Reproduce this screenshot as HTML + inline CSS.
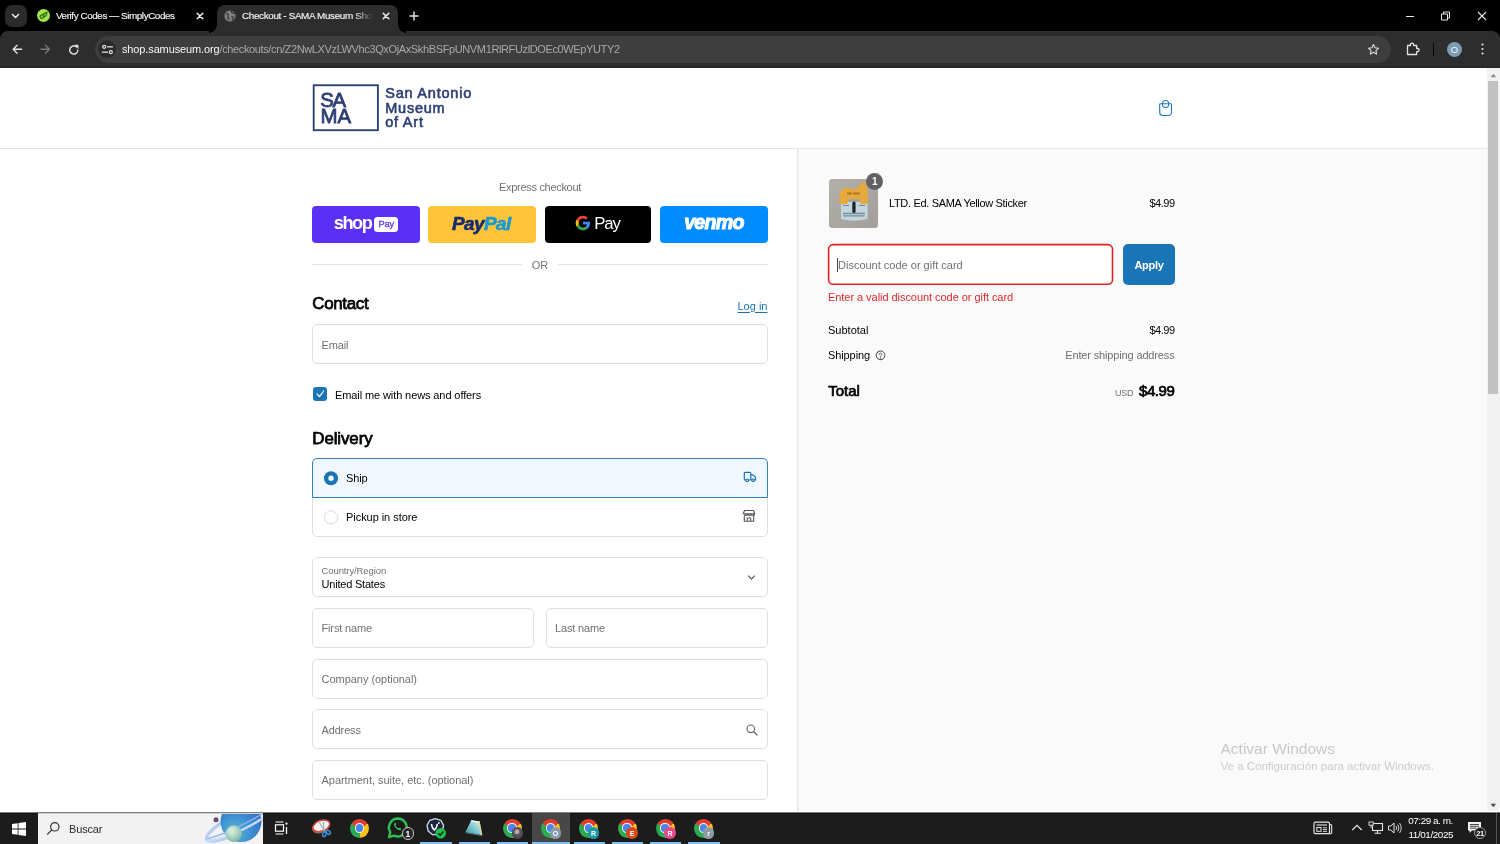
<!DOCTYPE html>
<html>
<head>
<meta charset="utf-8">
<title>Checkout - SAMA Museum Shop</title>
<style>
*{box-sizing:border-box;margin:0;padding:0}
html,body{width:1500px;height:844px;overflow:hidden;background:#fff}
body{font-family:"Liberation Sans",sans-serif;position:relative;color:#000;-webkit-font-smoothing:antialiased}
.abs{position:absolute}
.t{position:absolute;white-space:nowrap;line-height:1}
/* browser chrome */
#tabbar{left:0;top:0;width:1500px;height:42px;background:#000}
#toolbar{left:0;top:31px;width:1500px;height:37px;background:#2d2d2d;border-radius:8px 8px 0 0}
#urlpill{left:94.500px;top:36px;width:1296.500px;height:26.500px;border-radius:13.500px;background:#3e3e3e}
#tab2{left:217px;top:5px;width:181px;height:28px;background:#2d2d2d;border-radius:8px 8px 0 0}
#tbline{left:0;top:66px;width:1500px;height:2px;background:#272727}
.tabtxt{font-size:9.900px;color:#f4f4f4;top:10.800px;letter-spacing:-0.420px;-webkit-text-stroke:0.150px #f4f4f4}
/* page */
#hdr{left:0;top:68px;width:1487px;height:81px;background:#fff;border-bottom:1px solid #e6e6e6}
#left{left:0;top:149px;width:797px;height:663px;background:#fff}
#right{left:797px;top:149px;width:690px;height:664px;background:#fafafa;border-left:1px solid #e8e8e8}
#rline{left:798px;top:149px;width:1px;height:664px;background:#f1f1f1}
#sb{left:1487px;top:68px;width:13px;height:744px;background:#f1f1f1}
#sbthumb{left:1488.300px;top:81px;width:10px;height:312.800px;background:#c1c1c1}
.field{position:absolute;background:#fff;border:1px solid #e0e0e0;border-radius:5px}
.ph{position:absolute;white-space:nowrap;line-height:1;color:#707070;font-size:11px;letter-spacing:-0.150px}
/* taskbar */
#taskbar{left:0;top:812px;width:1500px;height:32px;background:#1c1c1c;border-top:1px solid #808080}
#tbwhite{left:0;top:811px;width:1500px;height:1px;background:#fff}
</style>
</head>
<body>
<div id="wrap" style="position:absolute;left:0;top:0;width:1500px;height:844px;will-change:transform;overflow:hidden">
<!-- ===== Browser chrome ===== -->
<div class="abs" id="tabbar"></div>
<div class="abs" id="toolbar"></div>
<div class="abs" id="tbline"></div>
<div class="abs" id="tab2"></div>
<div class="abs" style="left:209px;top:25px;width:8px;height:8px;background:radial-gradient(circle at 0 0,#000 7.5px,#2d2d2d 8px)"></div>
<div class="abs" style="left:398px;top:25px;width:8px;height:8px;background:radial-gradient(circle at 100% 0,#000 7.5px,#2d2d2d 8px)"></div>
<div class="abs" id="urlpill"></div>
<!-- tab search -->
<div class="abs" style="left:5px;top:5px;width:21.500px;height:22px;border-radius:7px;background:#2b2b2b"></div>
<svg class="abs" style="left:10px;top:11px" width="11" height="10" viewBox="0 0 11 10"><path d="M2.5 3.5 L5.5 6.5 L8.5 3.5" fill="none" stroke="#e8e8e8" stroke-width="1.5" stroke-linecap="round" stroke-linejoin="round"/></svg>
<!-- tab 1 -->
<div class="abs" style="left:37.100px;top:9.100px;width:13px;height:13px;border-radius:50%;background:#a3e34b"></div>
<svg class="abs" style="left:37.100px;top:9.100px" width="13" height="13" viewBox="0 0 13 13"><ellipse cx="5.300" cy="7.300" rx="2.300" ry="1.700" transform="rotate(-35 5.300 7.300)" fill="none" stroke="#2a6a10" stroke-width="1.100"/><ellipse cx="7.700" cy="5.700" rx="2.300" ry="1.500" transform="rotate(-35 7.700 5.700)" fill="none" stroke="#2a6a10" stroke-width="1.100"/><path d="M8.800 4.600 L10.300 3.100" stroke="#2a6a10" stroke-width="1.100" stroke-linecap="round"/></svg>
<div class="t tabtxt" style="left:56px">Verify Codes — SimplyCodes</div>
<svg class="abs" style="left:196px;top:12px" width="8" height="8" viewBox="0 0 8 8"><path d="M1.200 1.200 L6.800 6.800 M6.800 1.200 L1.200 6.800" stroke="#f0f0f0" stroke-width="1.500" stroke-linecap="round"/></svg>
<!-- tab 2 -->
<svg class="abs" style="left:223.5px;top:10px" width="12" height="12" viewBox="0 0 12 12"><circle cx="6" cy="6" r="5.6" fill="#7d7d7d"/><path d="M2 3.2c1.2.2 2 .9 2.2 2 .2 1-.6 1.500-.3 2.500.2.700.9 1.200.7 2.300M7.500 1c-.4.900.2 1.700 1.100 2 .8.300 1.900-.100 2.400.600M7.300 6.800c.8-.300 1.900.100 2.100.900.200.900-.5 1.900-1.300 2.500" fill="none" stroke="#2d2d2d" stroke-width="1.100"/></svg>
<div class="t tabtxt" style="left:242px;width:132px;overflow:hidden;letter-spacing:-0.350px;-webkit-mask-image:linear-gradient(90deg,#000 112px,transparent 131px);mask-image:linear-gradient(90deg,#000 112px,transparent 131px)">Checkout - SAMA Museum Shop</div>
<svg class="abs" style="left:382px;top:12px" width="8" height="8" viewBox="0 0 8 8"><path d="M1.200 1.200 L6.800 6.800 M6.800 1.200 L1.200 6.800" stroke="#f0f0f0" stroke-width="1.500" stroke-linecap="round"/></svg>
<svg class="abs" style="left:409px;top:11px" width="10" height="10" viewBox="0 0 10 10"><path d="M5 1 V9 M1 5 H9" stroke="#e8e8e8" stroke-width="1.4" stroke-linecap="round"/></svg>
<!-- window controls -->
<svg class="abs" style="left:1405px;top:11px" width="10" height="10" viewBox="0 0 10 10"><path d="M1 5.500 H9" stroke="#e8e8e8" stroke-width="1"/></svg>
<svg class="abs" style="left:1440px;top:11px" width="11" height="10" viewBox="0 0 11 10"><path d="M1.500 3 h6 v6 h-6 z M3.500 3 V1 h6 v6 h-2" fill="none" stroke="#e8e8e8" stroke-width="1"/></svg>
<svg class="abs" style="left:1477px;top:11px" width="10" height="10" viewBox="0 0 10 10"><path d="M1 1 L9 9 M9 1 L1 9" stroke="#e8e8e8" stroke-width="1.100"/></svg>
<!-- nav buttons -->
<svg class="abs" style="left:12px;top:44.200px" width="10.500" height="10.500" viewBox="0 0 12 12"><path d="M11 6 H1.500 M5.800 1.500 L1.300 6 L5.800 10.500" fill="none" stroke="#e4e4e4" stroke-width="1.500" stroke-linecap="round" stroke-linejoin="round"/></svg>
<svg class="abs" style="left:40px;top:44.200px" width="10.500" height="10.500" viewBox="0 0 12 12"><path d="M1 6 H10.500 M6.200 1.500 L10.700 6 L6.200 10.500" fill="none" stroke="#7a7a7a" stroke-width="1.500" stroke-linecap="round" stroke-linejoin="round"/></svg>
<svg class="abs" style="left:68px;top:43.600px" width="12" height="12" viewBox="0 0 12 12"><path d="M9.900 6.300 A4.100 4.100 0 1 1 8.300 2.700" fill="none" stroke="#e4e4e4" stroke-width="1.400" stroke-linecap="round"/><path d="M6.600 1 h3.500 v3.500 z" fill="#e4e4e4" stroke="#e4e4e4" stroke-width=".5" stroke-linejoin="round"/></svg>
<!-- site info -->
<div class="abs" style="left:98px;top:40.400px;width:18px;height:18px;border-radius:50%;background:#2b2b2b"></div>
<svg class="abs" style="left:101px;top:43px" width="13" height="13" viewBox="0 0 13 13"><circle cx="3.200" cy="3.800" r="1.500" fill="none" stroke="#e4e4e4" stroke-width="1.200"/><path d="M6.500 3.800 H11.500" stroke="#e4e4e4" stroke-width="1.300" stroke-linecap="round"/><circle cx="9.800" cy="9.200" r="1.500" fill="none" stroke="#e4e4e4" stroke-width="1.200"/><path d="M1.500 9.200 H6.500" stroke="#e4e4e4" stroke-width="1.300" stroke-linecap="round"/></svg>
<div class="t" style="left:122px;top:44px;font-size:11px;color:#f6f6f6;letter-spacing:-0.130px">shop.samuseum.org<span style="color:#a9a9a9;letter-spacing:-0.370px">/checkouts/cn/Z2NwLXVzLWVhc3QxOjAxSkhBSFpUNVM1RlRFUzlDOEc0WEpYUTY2</span></div>
<!-- right toolbar icons -->
<svg class="abs" style="left:1367px;top:43.200px" width="13" height="13" viewBox="0 0 14 14"><path d="M7 1.600 L8.600 5.200 L12.500 5.600 L9.600 8.200 L10.400 12 L7 10 L3.600 12 L4.400 8.200 L1.500 5.600 L5.400 5.200 Z" fill="none" stroke="#e4e4e4" stroke-width="1.100" stroke-linejoin="round"/></svg>
<svg class="abs" style="left:1405px;top:41px" width="15" height="15" viewBox="0 0 15 15"><path d="M2.500 4.500 h3 v-.8 a1.600 1.600 0 1 1 3.200 0 v.8 h3 v3 h.8 a1.600 1.600 0 1 1 0 3.200 h-.8 v2.800 h-9.200 z" fill="none" stroke="#e4e4e4" stroke-width="1.300" stroke-linejoin="round"/></svg>
<div class="abs" style="left:1432.500px;top:43px;width:1.500px;height:12.500px;background:#060606"></div>
<div class="abs" style="left:1446.700px;top:41.500px;width:15.600px;height:15.600px;border-radius:50%;background:#7c9cb3"></div>
<div class="t" style="left:1447px;top:44.600px;width:15px;text-align:center;font-size:9.500px;color:#f4f8fa">O</div>
<svg class="abs" style="left:1480.200px;top:42.300px" width="5" height="14" viewBox="0 0 5 14"><circle cx="2.500" cy="2.500" r="1.100" fill="#e4e4e4"/><circle cx="2.500" cy="7" r="1.100" fill="#e4e4e4"/><circle cx="2.500" cy="11.500" r="1.100" fill="#e4e4e4"/></svg>

<!-- ===== Page ===== -->
<div class="abs" id="hdr"></div>
<div class="abs" id="left"></div>
<div class="abs" id="right"></div>
<div class="abs" id="rline"></div>
<div class="abs" id="sb"></div>
<div class="abs" id="sbthumb"></div>
<svg class="abs" style="left:1489px;top:72px" width="9" height="7" viewBox="0 0 9 7"><path d="M1.600 5.200 L4.400 1.800 L7.200 5.200 Z" fill="#8c8c8c"/></svg>
<svg class="abs" style="left:1489px;top:802px" width="9" height="7" viewBox="0 0 9 7"><path d="M1.500 1.800 L4.300 5.200 L7.100 1.800 Z" fill="#4f4f4f"/></svg>

<!-- logo -->
<svg class="abs" style="left:310px;top:82px" width="72" height="52" viewBox="0 0 72 52"><rect x="3.700" y="3.250" width="64.200" height="44.950" fill="none" stroke="#2c3e73" stroke-width="1.850"/></svg>
<div class="t" style="left:320.300px;top:89.600px;font-size:20.400px;font-weight:400;-webkit-text-stroke:0.800px #2c3e73;color:#2c3e73;letter-spacing:-1.300px">SA</div>
<div class="t" style="left:320.600px;top:106px;font-size:20.400px;font-weight:400;-webkit-text-stroke:0.800px #2c3e73;color:#2c3e73;letter-spacing:-0.200px">MA</div>
<div class="t" style="left:385.200px;top:86px;font-size:14.500px;font-weight:400;-webkit-text-stroke:0.600px #2c3e73;color:#2c3e73;line-height:14.700px;white-space:pre;letter-spacing:0.780px">San Antonio
Museum
of Art</div>
<!-- cart icon -->
<svg class="abs" style="left:1157px;top:98px" width="17" height="20" viewBox="0 0 17 20"><path d="M3.300 5.700 h10.600 a.6.600 0 0 1 .6.600 v8.200 a3 3 0 0 1 -3 3 h-5.800 a3 3 0 0 1 -3 -3 v-8.200 a.6.600 0 0 1 .6-.6 z" fill="none" stroke="#2079b6" stroke-width="1.100"/><ellipse cx="8.600" cy="6" rx="3.150" ry="3.550" fill="none" stroke="#2079b6" stroke-width="1.100"/></svg>

<!-- express checkout -->
<div class="t" style="left:440px;width:200px;text-align:center;top:181.900px;font-size:11px;color:#707070;letter-spacing:-0.300px">Express checkout</div>
<div class="abs" style="left:312px;top:205.500px;width:107.500px;height:37px;border-radius:4px;background:#5a31f4"></div>
<div class="abs" style="left:428px;top:205.500px;width:108px;height:37px;border-radius:4px;background:#ffc439"></div>
<div class="abs" style="left:545px;top:205.500px;width:106px;height:37px;border-radius:4px;background:#000"></div>
<div class="abs" style="left:660px;top:205.500px;width:108px;height:37px;border-radius:4px;background:#008cff"></div>
<!-- shop pay -->
<div class="t" style="left:333.700px;top:213.800px;font-size:18.200px;font-weight:700;color:#fff;letter-spacing:-1.400px">shop</div>
<div class="abs" style="left:374.300px;top:216.600px;width:24px;height:15.200px;border-radius:3.500px;background:#fff"></div>
<div class="t" style="left:374.300px;top:219.600px;width:24px;text-align:center;font-size:9.300px;font-weight:400;-webkit-text-stroke:0.300px #5a31f4;color:#5a31f4;letter-spacing:-0.100px">Pay</div>
<!-- paypal -->
<div class="t" style="left:452px;top:213.700px;font-size:19px;font-weight:700;font-style:italic;color:#142c6e;-webkit-text-stroke:0.600px #142c6e;letter-spacing:-0.600px">Pay<span style="color:#169bd7;-webkit-text-stroke:0.600px #169bd7">Pal</span></div>
<!-- gpay -->
<svg class="abs" style="left:574.600px;top:215.200px" width="16" height="16" viewBox="0 0 48 48"><path fill="#4285F4" d="M45.100 24.500c0-1.600-.1-3.100-.4-4.500H24v8.500h11.800c-.5 2.800-2.100 5.100-4.400 6.700v5.500h7.100c4.200-3.800 6.600-9.500 6.600-16.200z"/><path fill="#34A853" d="M24 46c5.900 0 10.900-2 14.500-5.300l-7.100-5.500c-2 1.300-4.500 2.100-7.400 2.100-5.700 0-10.500-3.800-12.300-9H4.400v5.700C8 41.100 15.400 46 24 46z"/><path fill="#FBBC05" d="M11.700 28.300c-.4-1.300-.7-2.800-.7-4.300s.3-2.900.7-4.300V14H4.400C2.900 17 2 20.400 2 24s.9 7 2.400 10l7.300-5.700z"/><path fill="#EA4335" d="M24 10.800c3.200 0 6.100 1.100 8.400 3.300l6.300-6.300C34.900 4.200 29.900 2 24 2 15.400 2 8 6.900 4.400 14l7.300 5.700c1.800-5.200 6.600-8.900 12.300-8.900z"/></svg>
<div class="t" style="left:594.300px;top:216px;font-size:16.800px;color:#fff;letter-spacing:-1.200px">Pay</div>
<!-- venmo -->
<div class="t" style="left:660px;width:108px;text-align:center;top:213.400px;font-size:19.600px;font-weight:700;font-style:italic;color:#fff;-webkit-text-stroke:1px #fff;letter-spacing:-0.700px">venmo</div>
<!-- OR -->
<div class="abs" style="left:312px;top:264px;width:210px;height:1px;background:#e2e2e2"></div>
<div class="abs" style="left:558px;top:264px;width:210px;height:1px;background:#e2e2e2"></div>
<div class="t" style="left:520px;width:40px;text-align:center;top:260px;font-size:11px;color:#707070">OR</div>

<!-- Contact -->
<div class="t" style="left:312.300px;top:296.2px;font-size:16.900px;font-weight:400;-webkit-text-stroke:0.750px #000;letter-spacing:-0.320px">Contact</div>
<div class="t" style="left:737.500px;top:300.500px;font-size:11px;color:#1773b0;text-decoration:underline;text-underline-offset:1.500px">Log in</div>
<div class="field" style="left:312px;top:324px;width:456px;height:39.500px"></div>
<div class="ph" style="left:321.500px;top:339.500px">Email</div>
<div class="abs" style="left:313px;top:387px;width:14px;height:14px;border-radius:3px;background:#1975b6"></div>
<svg class="abs" style="left:313px;top:387px" width="14" height="14" viewBox="0 0 14 14"><path d="M4 6.900 L6.500 9.600 L10.600 4" fill="none" stroke="#fff" stroke-width="1.150" stroke-linecap="round" stroke-linejoin="round"/></svg>
<div class="t" style="left:335px;top:389.500px;font-size:11px;letter-spacing:-0.100px">Email me with news and offers</div>

<!-- Delivery -->
<div class="t" style="left:312.300px;top:431px;font-size:16.900px;font-weight:400;-webkit-text-stroke:0.750px #000;letter-spacing:-0.100px">Delivery</div>
<div class="abs" style="left:312px;top:497px;width:456px;height:39.500px;background:#fff;border:1px solid #dedede;border-radius:0 0 5px 5px"></div>
<div class="abs" style="left:312px;top:458px;width:456px;height:40px;background:#f0f7ff;border:1px solid #2f82bd;border-radius:5px 5px 0 0"></div>
<svg class="abs" style="left:323px;top:470px" width="16" height="16" viewBox="0 0 16 16"><circle cx="8" cy="8.200" r="7" fill="#1975b6"/><circle cx="8" cy="8.200" r="2.600" fill="#fff"/></svg>
<div class="t" style="left:346px;top:473px;font-size:11px;letter-spacing:-0.100px">Ship</div>
<svg class="abs" style="left:323px;top:509px" width="16" height="16" viewBox="0 0 16 16"><circle cx="8" cy="8.300" r="6.600" fill="#fff" stroke="#d6d6d6" stroke-width="0.900"/></svg>
<div class="t" style="left:346px;top:512px;font-size:11px;letter-spacing:-0.050px">Pickup in store</div>
<!-- truck -->
<svg class="abs" style="left:742.500px;top:470.400px" width="14" height="14" viewBox="0 0 14 14"><path d="M1.300 3.300 a1 1 0 0 1 1 -1 h4.500 a1 1 0 0 1 1 1 v6.700 h-5.500 a1 1 0 0 1 -1 -1 z M7.800 4.800 h2.400 l2.300 2.500 v2.700 h-4.700" fill="none" stroke="#1773b0" stroke-width="1.200" stroke-linejoin="round"/><circle cx="4.200" cy="10.300" r="1.300" fill="#f0f7ff" stroke="#1773b0" stroke-width="1.100"/><circle cx="10.200" cy="10.300" r="1.300" fill="#f0f7ff" stroke="#1773b0" stroke-width="1.100"/></svg>
<!-- store -->
<svg class="abs" style="left:742px;top:509px" width="14" height="14" viewBox="0 0 14 14"><path d="M2.500 1.500 h9 l1.200 3.200 a1.700 1.700 0 0 1 -3.400 0 a1.700 1.700 0 0 1 -3.400 0 a1.700 1.700 0 0 1 -3.400 0 a1.700 1.700 0 0 1 -1.200 0 z M2.300 6.500 v5.800 h9.400 v-5.800 M5.300 12.300 v-3.300 h3.400 v3.300 M1.500 4.700 h11" fill="none" stroke="#555" stroke-width="1.100" stroke-linejoin="round"/></svg>

<!-- address fields -->
<div class="field" style="left:312px;top:557px;width:456px;height:39.500px"></div>
<div class="ph" style="left:321.500px;top:565.500px;font-size:9.500px;letter-spacing:-0.100px">Country/Region</div>
<div class="t" style="left:321.500px;top:578.500px;font-size:11px;letter-spacing:-0.200px">United States</div>
<svg class="abs" style="left:746px;top:573px" width="11" height="9" viewBox="0 0 11 9"><path d="M2.500 3 L5.500 6 L8.500 3" fill="none" stroke="#636363" stroke-width="1.200" stroke-linecap="round" stroke-linejoin="round"/></svg>
<div class="field" style="left:312px;top:608px;width:222px;height:39.500px"></div>
<div class="ph" style="left:321.500px;top:623px">First name</div>
<div class="field" style="left:546px;top:608px;width:222px;height:39.500px"></div>
<div class="ph" style="left:555px;top:623px">Last name</div>
<div class="field" style="left:312px;top:659px;width:456px;height:39.500px"></div>
<div class="ph" style="left:321.500px;top:673.500px;letter-spacing:-0.030px">Company (optional)</div>
<div class="field" style="left:312px;top:709px;width:456px;height:40px"></div>
<div class="ph" style="left:321.500px;top:724.500px">Address</div>
<svg class="abs" style="left:745px;top:723px" width="14" height="14" viewBox="0 0 14 14"><circle cx="5.800" cy="5.800" r="3.800" fill="none" stroke="#6a6a6a" stroke-width="1.200"/><path d="M8.700 8.700 L12 12" stroke="#6a6a6a" stroke-width="1.300" stroke-linecap="round"/></svg>
<div class="field" style="left:312px;top:760px;width:456px;height:39.500px"></div>
<div class="ph" style="left:321.500px;top:775px;letter-spacing:-0.030px">Apartment, suite, etc. (optional)</div>
<div class="field" style="left:312px;top:810.500px;width:143.500px;height:39.500px"></div>
<div class="field" style="left:468.500px;top:810.500px;width:143px;height:39.500px"></div>
<div class="field" style="left:624.500px;top:810.500px;width:144px;height:39.500px"></div>

<!-- RIGHTCOL -->
<!-- thumbnail -->
<div class="abs" style="left:829px;top:179px;width:48.500px;height:48.500px;border-radius:4px;background:#a9a6a1;overflow:hidden">
<svg width="49" height="49" viewBox="0 0 49 49"><defs><linearGradient id="tg" x1="0" y1="0" x2="1" y2="1"><stop offset="0" stop-color="#b3b0ac"/><stop offset="1" stop-color="#a29f9a"/></linearGradient></defs><rect width="49" height="49" fill="url(#tg)"/><path d="M12 23 L38.600 23 L38.600 40 Q25 43.500 12 40 Z" fill="#c3d5dd"/><path d="M11 25 C9.500 19 10 10 17 8.800 C21 8.500 25 12.500 28 9 C30 6 32 3 35 3.800 C38.500 5 39 12 38.800 25 L31.500 25 L31 20.500 L19 20.500 L18.500 25 Z" fill="#e6a93c"/><rect x="23.300" y="22.500" width="3.300" height="11.500" rx="1.600" fill="#1f2428"/><path d="M14 26.500 h6 M30 26.500 h6" stroke="#6f8590" stroke-width="1"/><path d="M14 34.500 h22 M14.500 36.800 h21" stroke="#5f7681" stroke-width="1.300" opacity=".75"/><path d="M18 14.500 h5 M24 14.500 h7" stroke="#9a6a1c" stroke-width="2" opacity=".8"/><path d="M20 21 h10" stroke="#8d9aa0" stroke-width="1.200"/></svg>
</div>
<div class="abs" style="left:866.200px;top:173.200px;width:17px;height:17px;border-radius:50%;background:#616161"></div>
<div class="t" style="left:866.200px;top:176.700px;width:17px;text-align:center;font-size:10px;font-weight:700;color:#fff">1</div>
<div class="t" style="left:889px;top:197.500px;font-size:11px;letter-spacing:-0.330px">LTD. Ed. SAMA Yellow Sticker</div>
<div class="t" style="right:325.500px;top:197.500px;font-size:11px;letter-spacing:-0.500px">$4.99</div>
<!-- discount -->
<svg class="abs" style="left:826px;top:242px" width="290" height="45" viewBox="0 0 290 45"><rect x="2.600" y="2.600" width="283.900" height="39.700" rx="4.600" fill="#fff" stroke="#dd2222" stroke-width="1.600"/></svg>
<div class="abs" style="left:837px;top:257.500px;width:1px;height:14.500px;background:#4a4a4a"></div>
<div class="ph" style="left:838px;top:260px;letter-spacing:0">Discount code or gift card</div>
<div class="abs" style="left:1123px;top:244px;width:52px;height:41px;border-radius:5px;background:#1975b6"></div>
<div class="t" style="left:1123.500px;width:51px;text-align:center;top:259.500px;font-size:11px;font-weight:700;color:#fff;letter-spacing:-0.300px">Apply</div>
<div class="t" style="left:828px;top:291.500px;font-size:11px;color:#dc2a2a;letter-spacing:-0.050px">Enter a valid discount code or gift card</div>
<!-- totals -->
<div class="t" style="left:828px;top:324.500px;font-size:11px">Subtotal</div>
<div class="t" style="right:325.500px;top:324.500px;font-size:11px;letter-spacing:-0.500px">$4.99</div>
<div class="t" style="left:828px;top:349.500px;font-size:11px;letter-spacing:-0.100px">Shipping</div>
<svg class="abs" style="left:875px;top:349.500px" width="11" height="11" viewBox="0 0 11 11"><circle cx="5.500" cy="5.300" r="4.300" fill="none" stroke="#555" stroke-width="1.050"/><path d="M4.200 4.400 a1.300 1.300 0 1 1 1.800 1.200 c-.4.200-.5.400-.5.900" fill="none" stroke="#555" stroke-width="0.900" stroke-linecap="round"/><circle cx="5.500" cy="7.900" r=".55" fill="#555"/></svg>
<div class="t" style="right:325.500px;top:349.500px;font-size:11px;color:#707070;letter-spacing:-0.150px">Enter shipping address</div>
<div class="t" style="left:828.200px;top:383.300px;font-size:15px;font-weight:400;-webkit-text-stroke:0.700px #000;letter-spacing:0px">Total</div>
<div class="t" style="left:1115px;top:388.500px;font-size:9px;color:#707070;letter-spacing:-0.200px">USD</div>
<div class="t" style="right:325.500px;top:383.300px;font-size:15px;font-weight:400;-webkit-text-stroke:0.700px #000;letter-spacing:-0.400px">$4.99</div>
<!-- watermark -->
<div class="t" style="left:1220.500px;top:741px;font-size:15.500px;color:#c8c8c8">Activar Windows</div>
<div class="t" style="left:1220.500px;top:761px;font-size:11.500px;color:#cbcbcb">Ve a Configuración para activar Windows.</div>

<!-- ===== Taskbar ===== -->
<div class="abs" id="tbwhite"></div>
<div class="abs" id="taskbar"></div>
<div class="abs" style="left:0;top:813px;width:1500px;height:1px;background:#101010"></div>
<!-- start -->
<svg class="abs" style="left:11.500px;top:822px" width="14" height="14" viewBox="0 0 14 14"><path d="M0 2 L5.700 1.200 V6.600 H0 Z M6.500 1.100 L14 0 V6.600 H6.500 Z M0 7.400 H5.700 V12.800 L0 12 Z M6.500 7.400 H14 V14 L6.500 12.900 Z" fill="#fff"/></svg>
<!-- search box -->
<div class="abs" style="left:38px;top:813px;width:225px;height:31px;background:#f2f2f2;border-top:1px solid #cfcfcf;overflow:hidden">
<svg class="abs" style="left:150px;top:0" width="75" height="31" viewBox="150 0 75 31"><defs><radialGradient id="pg" cx="0.35" cy="0.75" r="0.8"><stop offset="0" stop-color="#59b8d4"/><stop offset=".5" stop-color="#3c8fd2"/><stop offset="1" stop-color="#3468c4"/></radialGradient><radialGradient id="mg" cx="0.4" cy="0.35" r="0.7"><stop offset="0" stop-color="#dff2e4"/><stop offset=".6" stop-color="#a3d0bd"/><stop offset="1" stop-color="#7faeaa"/></radialGradient></defs>
<ellipse cx="202.600" cy="8" rx="38" ry="9" transform="rotate(-27 202.600 8)" fill="none" stroke="#b4cdf3" stroke-width="3.200"/>
<circle cx="203" cy="7.500" r="20.500" fill="url(#pg)"/>
<path d="M170 24.500 Q184 21 200 13 Q214 6 226 -1" fill="none" stroke="#8fb4ea" stroke-width="1.600" opacity=".9"/>
<path d="M168.500 27 Q186 25 204 16 Q216 10 227 3" fill="none" stroke="#c9dcf7" stroke-width="2.400" opacity=".95"/>
<circle cx="195.700" cy="19.700" r="8.200" fill="url(#mg)"/>
<circle cx="178" cy="5.700" r="2.500" fill="#6b4a78"/>
</svg>
</div>
<svg class="abs" style="left:46px;top:821px" width="15" height="15" viewBox="0 0 15 15"><circle cx="8.800" cy="5.800" r="4.200" fill="none" stroke="#333" stroke-width="1.200"/><path d="M5.800 8.900 L1.200 13.600" stroke="#333" stroke-width="1.300"/></svg>
<div class="t" style="left:69px;top:823.600px;font-size:11px;color:#2b2b2b;letter-spacing:-0.150px">Buscar</div>
<!-- task view -->
<svg class="abs" style="left:274px;top:821px" width="15" height="14" viewBox="0 0 15 14"><path d="M1.500 1 h8 M1.500 13 h8" stroke="#fff" stroke-width="1.200"/><rect x="1.500" y="3.800" width="8" height="6.400" fill="none" stroke="#fff" stroke-width="1.200"/><path d="M12.500 6 V13" stroke="#fff" stroke-width="1.300"/><circle cx="12.500" cy="2.700" r="1.100" fill="#fff"/></svg>
<!-- snip -->
<svg class="abs" style="left:308px;top:815px" width="26" height="26" viewBox="308 815 26 26"><ellipse cx="320.800" cy="827.600" rx="8.800" ry="5.300" transform="rotate(-20 320.800 827.600)" fill="#8d6f6a"/><ellipse cx="321.300" cy="825.800" rx="8.800" ry="5.300" transform="rotate(-20 321.300 825.800)" fill="#f6f3f1" stroke="#d8463f" stroke-width="1.500"/><path d="M319.300 822.500 L325.800 832.500 M323.600 822 L323.800 831.500" stroke="#9aa3ad" stroke-width="1.100"/><ellipse cx="324.300" cy="834.300" rx="1.700" ry="2.300" transform="rotate(20 324.300 834.300)" fill="none" stroke="#3b8fe0" stroke-width="1.500"/><ellipse cx="328.300" cy="832.300" rx="1.700" ry="2.300" transform="rotate(-50 328.300 832.300)" fill="none" stroke="#3b8fe0" stroke-width="1.500"/></svg>
<div class="abs" style="left:350.0px;top:818.5px;width:19.0px;height:19.0px;border-radius:50%;background:conic-gradient(from -60deg,#e33b2e 0 120deg,#fbc116 120deg 240deg,#2da94f 240deg 360deg)"></div><div class="abs" style="left:354.9px;top:823.4px;width:9.2px;height:9.2px;border-radius:50%;background:#f4f4f4"></div><div class="abs" style="left:355.9px;top:824.4px;width:7.2px;height:7.2px;border-radius:50%;background:#4a86e8"></div>
<svg class="abs" style="left:386px;top:816px" width="24" height="24" viewBox="0 0 24 24"><path d="M12 2.500 a9 9 0 0 0 -7.700 13.700 L3 21 l5-1.300 A9 9 0 1 0 12 2.500 z" fill="none" stroke="#2fbf55" stroke-width="2.400" stroke-linejoin="round"/><path d="M8.500 7.500 c-.8.800-.6 2.600 1.300 4.600 s4 2.600 4.900 1.900 c.7-.6.700-1.200.3-1.500 l-1.400-.8 c-.5-.2-.8.400-1.200.5 s-1.300-.5-1.900-1.200 s-1-1.500-.8-1.800 s.8-.6.600-1.100 l-.6-1.200 c-.3-.4-.8-.3-1.200.1 z" fill="#2fbf55"/></svg>
<div class="abs" style="left:401.500px;top:827.400px;width:12.500px;height:12.500px;border-radius:50%;background:#262626;border:1px solid #c8c8c8"></div>
<div class="t" style="left:401.500px;top:829.700px;width:12.500px;text-align:center;font-size:8.500px;color:#fff;font-weight:700">1</div>
<!-- vpn-ish -->
<svg class="abs" style="left:425px;top:816px" width="24" height="24" viewBox="0 0 24 24"><path d="M10.300 2.600 L15.800 4.300 L18.600 9.400 L17.400 15 L13 18.700 L7.600 18.700 L3.200 15 L2 9.400 L4.800 4.300 Z" fill="#1c2540" stroke="#d3d9e8" stroke-width="1.300" stroke-linejoin="round"/><path d="M6.500 8 q.5 4.500 2.800 6 q2.400-1.500 3-6" fill="none" stroke="#fff" stroke-width="1.500"/><circle cx="13.800" cy="7" r=".9" fill="#fff"/><circle cx="15.700" cy="17.300" r="5.300" fill="#22c14b"/><path d="M13.200 17.300 l1.900 1.900 l3.300-3.700" fill="none" stroke="#0c2a12" stroke-width="1.500"/></svg>
<!-- notepad -->
<svg class="abs" style="left:462px;top:815px" width="24" height="24" viewBox="462 815 24 24"><defs><linearGradient id="ng" x1="0" y1="1" x2="1" y2="0"><stop offset="0" stop-color="#2f8f9c"/><stop offset=".55" stop-color="#8fd0d8"/><stop offset="1" stop-color="#e4f5f7"/></linearGradient></defs><path d="M471.300 820.300 L479.600 821.400 L482.300 835.300 L465.300 832.200 Z" fill="url(#ng)"/><path d="M471.300 820.300 L479.600 821.400 L479.900 822.800 L470.700 821.600 Z" fill="#f4fbfc"/><path d="M479.600 821.400 L482.300 835.300 L480.900 835.100 L478.400 821.300 Z" fill="#e9d58a"/><path d="M465.300 832.200 L482.300 835.300 L482 836.300 L465.600 833.300 Z" fill="#4d6f78"/></svg>
<div class="abs" style="left:502.5px;top:818.5px;width:19.0px;height:19.0px;border-radius:50%;background:conic-gradient(from -60deg,#e33b2e 0 120deg,#fbc116 120deg 240deg,#2da94f 240deg 360deg)"></div><div class="abs" style="left:507.4px;top:823.4px;width:9.2px;height:9.2px;border-radius:50%;background:#f4f4f4"></div><div class="abs" style="left:508.4px;top:824.4px;width:7.2px;height:7.2px;border-radius:50%;background:#4a86e8"></div>
<div class="abs" style="left:511.500px;top:827px;width:11.500px;height:11.500px;border-radius:50%;background:radial-gradient(circle at 45% 40%,#b9a79c 0 22%,#5a5560 30%,#3d3a44 100%)"></div>
<div class="abs" style="left:531.500px;top:813px;width:38.500px;height:29px;background:#474747"></div>
<div class="abs" style="left:541.0px;top:818.5px;width:19.0px;height:19.0px;border-radius:50%;background:conic-gradient(from -60deg,#e33b2e 0 120deg,#fbc116 120deg 240deg,#2da94f 240deg 360deg)"></div><div class="abs" style="left:545.9px;top:823.4px;width:9.2px;height:9.2px;border-radius:50%;background:#f4f4f4"></div><div class="abs" style="left:546.9px;top:824.4px;width:7.2px;height:7.2px;border-radius:50%;background:#4a86e8"></div><div class="abs" style="left:549.85px;top:827.05px;width:11.500px;height:11.500px;border-radius:50%;background:#8a9bab"></div><div class="t" style="left:549.85px;top:829.65px;width:11.500px;text-align:center;font-size:7px;color:#fff;font-weight:700">O</div>
<div class="abs" style="left:579.0px;top:818.5px;width:19.0px;height:19.0px;border-radius:50%;background:conic-gradient(from -60deg,#e33b2e 0 120deg,#fbc116 120deg 240deg,#2da94f 240deg 360deg)"></div><div class="abs" style="left:583.9px;top:823.4px;width:9.2px;height:9.2px;border-radius:50%;background:#f4f4f4"></div><div class="abs" style="left:584.9px;top:824.4px;width:7.2px;height:7.2px;border-radius:50%;background:#4a86e8"></div><div class="abs" style="left:587.85px;top:827.05px;width:11.500px;height:11.500px;border-radius:50%;background:#1b9aa5"></div><div class="t" style="left:587.85px;top:829.65px;width:11.500px;text-align:center;font-size:7px;color:#fff;font-weight:700">R</div>
<div class="abs" style="left:617.5px;top:818.5px;width:19.0px;height:19.0px;border-radius:50%;background:conic-gradient(from -60deg,#e33b2e 0 120deg,#fbc116 120deg 240deg,#2da94f 240deg 360deg)"></div><div class="abs" style="left:622.4px;top:823.4px;width:9.2px;height:9.2px;border-radius:50%;background:#f4f4f4"></div><div class="abs" style="left:623.4px;top:824.4px;width:7.2px;height:7.2px;border-radius:50%;background:#4a86e8"></div><div class="abs" style="left:626.35px;top:827.05px;width:11.500px;height:11.500px;border-radius:50%;background:#d4481c"></div><div class="t" style="left:626.35px;top:829.65px;width:11.500px;text-align:center;font-size:7px;color:#fff;font-weight:700">E</div>
<div class="abs" style="left:655.5px;top:818.5px;width:19.0px;height:19.0px;border-radius:50%;background:conic-gradient(from -60deg,#e33b2e 0 120deg,#fbc116 120deg 240deg,#2da94f 240deg 360deg)"></div><div class="abs" style="left:660.4px;top:823.4px;width:9.2px;height:9.2px;border-radius:50%;background:#f4f4f4"></div><div class="abs" style="left:661.4px;top:824.4px;width:7.2px;height:7.2px;border-radius:50%;background:#4a86e8"></div><div class="abs" style="left:664.35px;top:827.05px;width:11.500px;height:11.500px;border-radius:50%;background:#e9478c"></div><div class="t" style="left:664.35px;top:829.65px;width:11.500px;text-align:center;font-size:7px;color:#fff;font-weight:700">R</div>
<div class="abs" style="left:694.0px;top:818.5px;width:19.0px;height:19.0px;border-radius:50%;background:conic-gradient(from -60deg,#e33b2e 0 120deg,#fbc116 120deg 240deg,#2da94f 240deg 360deg)"></div><div class="abs" style="left:698.9px;top:823.4px;width:9.2px;height:9.2px;border-radius:50%;background:#f4f4f4"></div><div class="abs" style="left:699.9px;top:824.4px;width:7.2px;height:7.2px;border-radius:50%;background:#4a86e8"></div><div class="abs" style="left:702.85px;top:827.05px;width:11.500px;height:11.500px;border-radius:50%;background:#8e9ba3"></div><div class="t" style="left:702.85px;top:829.65px;width:11.500px;text-align:center;font-size:7px;color:#fff;font-weight:700">r</div>
<div class="abs" style="left:420px;top:841.800px;width:31.6px;height:2.200px;background:#7fbfee"></div>
<div class="abs" style="left:458.7px;top:841.800px;width:30.9px;height:2.200px;background:#7fbfee"></div>
<div class="abs" style="left:496.7px;top:841.800px;width:31.6px;height:2.200px;background:#7fbfee"></div>
<div class="abs" style="left:531.5px;top:841.800px;width:38.5px;height:2.200px;background:#7fbfee"></div>
<div class="abs" style="left:574px;top:841.800px;width:31.0px;height:2.200px;background:#7fbfee"></div>
<div class="abs" style="left:612px;top:841.800px;width:31.0px;height:2.200px;background:#7fbfee"></div>
<div class="abs" style="left:650px;top:841.800px;width:31.0px;height:2.200px;background:#7fbfee"></div>
<div class="abs" style="left:688px;top:841.800px;width:31.6px;height:2.200px;background:#7fbfee"></div>
<!-- tray -->
<svg class="abs" style="left:1313px;top:821px" width="20" height="14" viewBox="0 0 20 14"><rect x="1" y="1.200" width="15.500" height="11.500" rx="1.500" fill="none" stroke="#e6e6e6" stroke-width="1.200"/><path d="M16.500 3.500 h1.200 a1 1 0 0 1 1 1 v6.700 a1.500 1.500 0 0 1 -1.500 1.500 h-2" fill="none" stroke="#e6e6e6" stroke-width="1.100"/><path d="M3.500 4 h10.500" stroke="#e6e6e6" stroke-width="1.100"/><rect x="3.800" y="6.500" width="4.200" height="3.800" fill="none" stroke="#e6e6e6" stroke-width="1"/><path d="M10 6.800 h4 M10 8.600 h4 M10 10.400 h4" stroke="#e6e6e6" stroke-width=".9"/></svg>
<svg class="abs" style="left:1351px;top:823px" width="12" height="9" viewBox="0 0 12 9"><path d="M1.300 7 L6 2.300 L10.700 7" fill="none" stroke="#e6e6e6" stroke-width="1.200"/></svg>
<svg class="abs" style="left:1368px;top:821px" width="16" height="14" viewBox="0 0 16 14"><rect x="4.500" y="2.500" width="10" height="7" fill="none" stroke="#e6e6e6" stroke-width="1.100"/><path d="M9.500 9.500 V12 M6.500 12.300 h6.500" stroke="#e6e6e6" stroke-width="1.100"/><rect x="1" y="1" width="4.200" height="3.200" fill="#1b1b1b" stroke="#e6e6e6" stroke-width=".9"/><path d="M3 4.200 V7" stroke="#e6e6e6" stroke-width=".9"/></svg>
<svg class="abs" style="left:1387px;top:821px" width="16" height="14" viewBox="0 0 16 14"><path d="M1.500 5 h2.300 L7 2 v10 L3.800 9 H1.500 z" fill="none" stroke="#e6e6e6" stroke-width="1" stroke-linejoin="round"/><path d="M9 5 q1.300 2 0 4 M10.800 3.500 q2.200 3.500 0 7 M12.600 2 q3.200 5 0 10" fill="none" stroke="#e6e6e6" stroke-width=".9"/></svg>
<div class="t" style="left:1402px;width:57px;text-align:center;top:815.700px;font-size:9.900px;color:#fff;letter-spacing:-0.450px">07:29 a. m.</div>
<div class="t" style="left:1402.300px;width:57px;text-align:center;top:830.300px;font-size:9.900px;color:#fff;letter-spacing:-0.400px">11/01/2025</div>
<svg class="abs" style="left:1467px;top:821px" width="15" height="13" viewBox="0 0 15 13"><path d="M1 1 h13 v8.500 h-9 l-2.500 2.500 v-2.500 h-1.500 z" fill="#f2f2f2"/><path d="M3 3.500 h9 M3 5.300 h9 M3 7.100 h6" stroke="#1b1b1b" stroke-width=".8"/></svg>
<div class="abs" style="left:1474px;top:827px;width:12px;height:12px;border-radius:50%;background:#1b1b1b;border:1px solid #9a9a9a"></div>
<div class="t" style="left:1472px;top:829.500px;width:16px;text-align:center;font-size:7.500px;color:#fff;font-weight:700;letter-spacing:-0.300px">21</div>
<div class="abs" style="left:1496px;top:813px;width:1px;height:31px;background:#555"></div>
</div>
</body>
</html>
